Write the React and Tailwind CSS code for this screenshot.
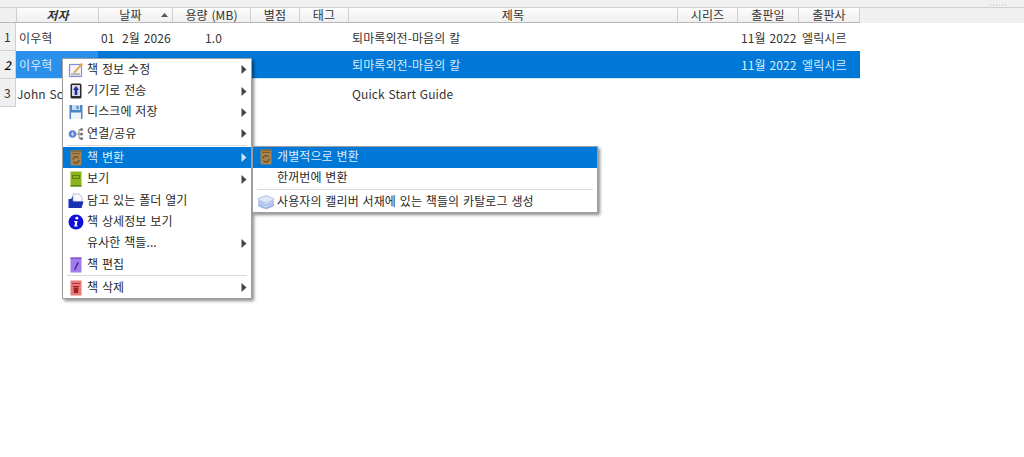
import React from "react";

const cols = [
  ["저자", 82, "italic font-bold"],
  ["날짜", 74, "pr-[10px]"],
  ["용량 (MB)", 78, ""],
  ["별점", 49, ""],
  ["태그", 49, ""],
  ["제목", 329, ""],
  ["시리즈", 60, ""],
  ["출판일", 61, ""],
  ["출판사", 61, ""],
];

const IconEdit = () => (
  <svg width="16" height="16" viewBox="0 0 16 16">
    <rect x="1.5" y="2.5" width="12" height="12" fill="#f4f4fb" stroke="#8a8ae6" strokeWidth="1.2" />
    <rect x="3" y="11" width="9" height="2.5" fill="#bdbdb4" />
    <path d="M5 10.5 L13.5 1 L15 2 L7 11 Z" fill="#e8a33a" />
  </svg>
);
const IconDevice = () => (
  <svg width="16" height="16" viewBox="0 0 16 16">
    <rect x="2.5" y="0.5" width="11" height="15" rx="1.5" fill="#2a2a2a" />
    <rect x="4" y="2" width="8" height="11" fill="#d8d8e8" />
    <path d="M8 3 L11 7 H9.3 V12 H6.7 V7 H5 Z" fill="#1f2f9a" />
  </svg>
);
const IconDisk = () => (
  <svg width="16" height="16" viewBox="0 0 16 16">
    <path d="M1.5 1 H14.5 V15 H1.5 Z" fill="#4a86c8" />
    <rect x="4" y="1" width="8" height="5" fill="#c9dcf0" />
    <rect x="3" y="8.5" width="10" height="6.5" fill="#eef3f9" />
    <rect x="8.5" y="2" width="2" height="3" fill="#4a86c8" />
  </svg>
);
const IconShare = () => (
  <svg width="16" height="16" viewBox="0 0 16 16">
    <circle cx="4.5" cy="8" r="3.8" fill="#5f86dc" />
    <path d="M3 8 H6 M4.5 6.2 V9.8" stroke="#cfdcf6" />
    <path d="M8 8 H11 M11 3.5 V12.5 M11 3.5 H13 M11 8 H13 M11 12.5 H13" stroke="#888" fill="none" />
    <circle cx="13.5" cy="3.5" r="1.6" fill="#7a7a7a" />
    <circle cx="13.5" cy="8" r="1.6" fill="#7a7a7a" />
    <circle cx="13.5" cy="12.5" r="1.6" fill="#7a7a7a" />
  </svg>
);
const IconConvert = () => (
  <svg width="16" height="16" viewBox="0 0 16 16">
    <rect x="2.5" y="0.5" width="11" height="15" fill="#a8824a" />
    <rect x="2.5" y="0.5" width="11" height="1.5" fill="#8a6a36" />
    <rect x="4" y="3" width="8" height="1" fill="#7d5f30" />
    <path d="M5 9.5 A3 3 0 0 1 10.5 8 M11 10 A3 3 0 0 1 5.5 11.7" stroke="#4a3a1c" strokeWidth="1" fill="none" />
  </svg>
);
const IconView = () => (
  <svg width="16" height="16" viewBox="0 0 16 16">
    <rect x="2.5" y="0.5" width="11" height="15" fill="#8cb41c" />
    <rect x="4.5" y="4.5" width="7" height="3" fill="none" stroke="#5f7f10" />
    <rect x="2.5" y="14" width="11" height="1.5" fill="#5f7f0f" />
  </svg>
);
const IconFolder = () => (
  <svg width="16" height="16" viewBox="0 0 16 16">
    <path d="M0.5 15 V6 H3 L5 3 V10 Z" fill="#1d2fb3" />
    <path d="M5 8 V1 H11 L14 4 V9 Z" fill="#f6f6fb" stroke="#9a9ab8" strokeWidth="0.6" />
    <path d="M0.5 15 L4 8.5 H15.5 L13.5 15 Z" fill="#1d2fb3" />
  </svg>
);
const IconInfo = () => (
  <svg width="16" height="16" viewBox="0 0 16 16">
    <circle cx="8" cy="8" r="7.5" fill="#1010d8" />
    <circle cx="8.8" cy="4.2" r="1.4" fill="#fff" />
    <path d="M6.3 7 H9.6 L8.6 11.4 H9.8 L9.5 12.6 H6.2 L7.2 8.2 H6.1 Z" fill="#fff" />
  </svg>
);
const IconTweak = () => (
  <svg width="16" height="16" viewBox="0 0 16 16">
    <rect x="2.5" y="0.5" width="11" height="15" fill="#a27cec" />
    <rect x="2.5" y="0.5" width="11" height="1.5" fill="#8058cc" />
    <path d="M6 12.5 L9.5 5 L10.8 5.6 L7.2 13 Z" fill="#3c2480" />
  </svg>
);
const IconDelete = () => (
  <svg width="16" height="16" viewBox="0 0 16 16">
    <rect x="2.5" y="0.5" width="11" height="15" fill="#e87a7a" />
    <rect x="4" y="3" width="8" height="1" fill="#b03a3a" />
    <path d="M5.5 7.5 H10.5 L10 13 H6 Z" fill="#a01f1f" />
    <rect x="5" y="6" width="6" height="1" fill="#a01f1f" />
  </svg>
);
const IconCatalog = () => (
  <svg width="16" height="16" viewBox="0 0 16 16">
    <path d="M0.5 10 L8 13.5 L15.5 10 V12 L8 15 L0.5 12 Z" fill="#a9c0ea" stroke="#7f9fd8" strokeWidth="0.6" />
    <path d="M0.5 7 L8 10.5 L15.5 7 V9 L8 12 L0.5 9 Z" fill="#c0d2f2" stroke="#7f9fd8" strokeWidth="0.6" />
    <path d="M0.5 4.5 L8 1.5 L15.5 4.5 V6 L8 9 L0.5 6 Z" fill="#dfe8f8" stroke="#7f9fd8" strokeWidth="0.6" />
  </svg>
);

const Arrow = ({ light }) => (
  <svg width="6" height="9" viewBox="0 0 6 9" className="shrink-0">
    <path d="M0.5 0 L5.5 4.5 L0.5 9 Z" fill={light ? "#cfe6fa" : "#444"} />
  </svg>
);

const MenuItem = ({ icon, label, arrow, active, h = "h-[21.4px]" }) => (
  <div className={`flex items-center ${h} ${active ? "bg-[#0078d7] text-[#d9ecfb]" : "text-[#2a2a2a]"}`}>
    <span className="w-[24px] shrink-0 flex justify-center pl-[1px]">{icon}</span>
    <span className="flex-1 whitespace-nowrap pb-[2px]">{label}</span>
    {arrow && <span className="pr-[4px]"><Arrow light={active} /></span>}
  </div>
);

const Sep = () => (
  <div className="h-[2.5px] flex items-start">
    <div className="h-px w-full bg-[#d8d8d8] mx-[4px]" />
  </div>
);

const rows = [
  { n: "1", author: "이우혁", date: "01  2월 2026", size: "1.0", title: "퇴마록외전-마음의 칼", pub: "11월 2022", publisher: "엘릭시르" },
  { n: "2", author: "이우혁", date: "", size: "", title: "퇴마록외전-마음의 칼", pub: "11월 2022", publisher: "엘릭시르", selected: true },
  { n: "3", author: "John Schember", date: "", size: "", title: "Quick Start Guide", pub: "", publisher: "", latin: true },
];

export default function App() {
  return (
    <div className="relative w-[1024px] h-[457px] overflow-hidden bg-white text-[12px] tracking-[0.1px] [word-spacing:1px] text-[#333] font-['Noto_Sans_CJK_KR','Noto_Sans',sans-serif]">
      <div className="h-[8px] bg-[#f0f0f0] border-b border-[#d0d0d0] relative">
        <div className="absolute right-[17px] top-[4px] flex gap-[1px]">
          {[0, 1, 2, 3, 4, 5].map((i) => <span key={i} className="w-[1px] h-[2px] bg-[#d0d0d0] mr-[1px]" />)}
        </div>
      </div>

      <div className="flex h-[15px] bg-[#f0f0f0]">
        <div className="flex w-[860px] bg-gradient-to-b from-[#fdfdfd] to-[#efefef] border-b border-[#b8b8b8]">
          <div className="w-[17px] shrink-0 border-r border-[#d0d0d0] bg-[#f0f0f0]" />
          {cols.map(([name, w, extra], i) => (
            <div
              key={name}
              style={{ width: w }}
              className={`relative shrink-0 flex items-center justify-center border-r border-[#d0d0d0] leading-none text-[#333] ${extra}`}
            >
              {name}
              {i === 1 && (
                <svg width="7" height="4" viewBox="0 0 7 4" className="absolute right-[4px] top-[5px]">
                  <path d="M0 4 L3.5 0 L7 4 Z" fill="#555" />
                </svg>
              )}
            </div>
          ))}
        </div>
      </div>

      {rows.map((r) => (
        <div key={r.n} className="flex h-[28px]">
          <div className={`w-[16px] shrink-0 flex items-center justify-center border-r border-b border-[#d0d0d0] bg-[#f0f0f0] ${r.selected ? "italic font-medium text-black" : "text-[#333]"}`}>
            {r.n}
          </div>
          <div className={`flex w-[844px] items-center leading-none ${r.selected ? "bg-[#0078d7] text-[#d9ecfb] border-b border-[#cfe8fb]" : ""}`}>
            <div className={`w-[82px] h-full shrink-0 ${r.latin ? "pl-[1px]" : "pl-[3px]"} pt-[1px] flex items-center whitespace-nowrap overflow-hidden ${r.selected ? "bg-[#2b90ea]" : ""}`}>{r.author}</div>
            <div className="w-[74px] shrink-0 pl-[3px] pt-[1px] whitespace-pre">{r.date}</div>
            <div className="w-[78px] shrink-0 pl-[33px] pt-[1px]">{r.size}</div>
            <div className="w-[49px] shrink-0" />
            <div className="w-[49px] shrink-0" />
            <div className="w-[329px] shrink-0 pl-[4px] pt-[1px] whitespace-nowrap">{r.title}</div>
            <div className="w-[60px] shrink-0" />
            <div className="w-[61px] shrink-0 pl-[4px] pt-[1px] whitespace-nowrap">{r.pub}</div>
            <div className="w-[62px] shrink-0 pl-[4px] pt-[1px] whitespace-nowrap">{r.publisher}</div>
          </div>
        </div>
      ))}

      <div className="absolute left-[62px] top-[58px] w-[190px] bg-white border border-[#a0a0a0] shadow-[2px_2px_3px_rgba(0,0,0,0.45)]">
        <MenuItem icon={<IconEdit />} label="책 정보 수정" arrow />
        <MenuItem icon={<IconDevice />} label="기기로 전송" arrow />
        <MenuItem icon={<IconDisk />} label="디스크에 저장" arrow />
        <MenuItem icon={<IconShare />} label="연결/공유" arrow />
        <Sep />
        <MenuItem icon={<IconConvert />} label="책 변환" arrow active />
        <MenuItem icon={<IconView />} label="보기" arrow />
        <MenuItem icon={<IconFolder />} label="담고 있는 폴더 열기" />
        <MenuItem icon={<IconInfo />} label="책 상세정보 보기" />
        <MenuItem label="유사한 책들..." arrow />
        <MenuItem icon={<IconTweak />} label="책 편집" />
        <Sep />
        <MenuItem icon={<IconDelete />} label="책 삭제" arrow h="h-[20px]" />
      </div>

      <div className="absolute left-[252px] top-[146px] w-[346px] bg-white border border-[#a0a0a0] shadow-[2px_2px_3px_rgba(0,0,0,0.45)]">
        <MenuItem icon={<IconConvert />} label="개별적으로 변환" active h="h-[20.5px]" />
        <MenuItem label="한꺼번에 변환" h="h-[21.5px]" />
        <Sep />
        <MenuItem icon={<IconCatalog />} label="사용자의 캘리버 서재에 있는 책들의 카탈로그 생성" h="h-[20px]" />
      </div>
    </div>
  );
}
